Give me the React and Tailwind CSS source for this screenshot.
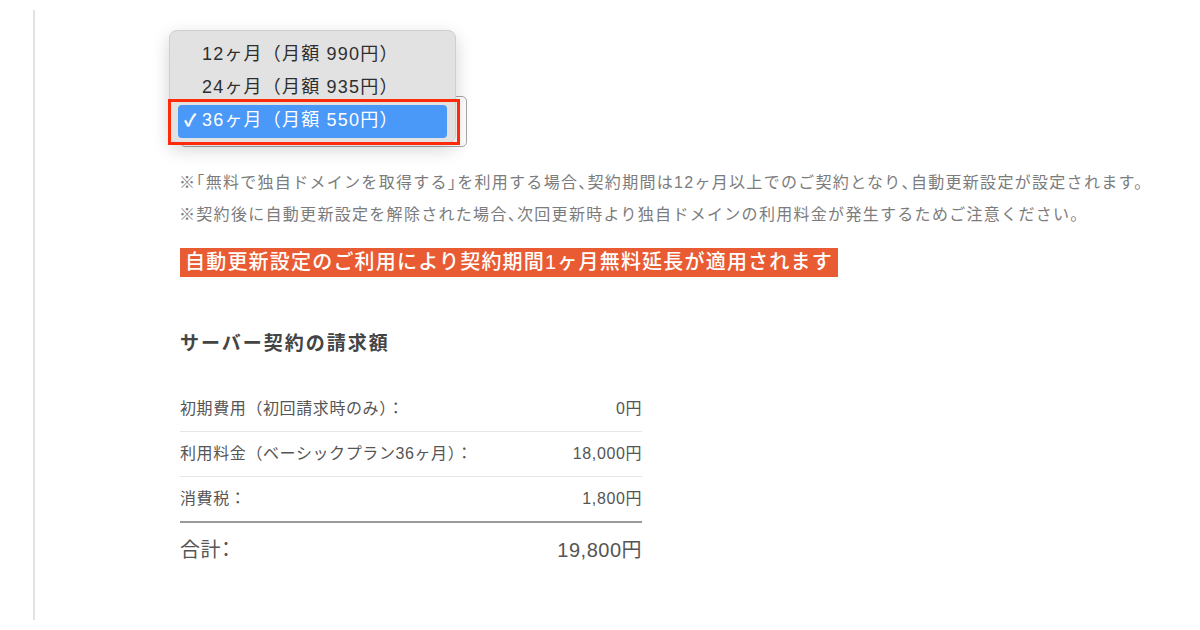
import React from "react";

const options = [
  { label: "12ヶ月（月額 990円）", selected: false },
  { label: "24ヶ月（月額 935円）", selected: false },
  { label: "36ヶ月（月額 550円）", selected: true },
];

const rows = [
  { label: "初期費用（初回請求時のみ）：", value: "0円" },
  { label: "利用料金（ベーシックプラン36ヶ月）：", value: "18,000円" },
  { label: "消費税：", value: "1,800円" },
];

// half-width punctuation like the original
const P = ({ children }) => <span className="[font-feature-settings:'halt']">{children}</span>;

const App = () => {
  return (
    <div className="w-[1200px] h-[630px] bg-white pl-[33px] pt-[10px] font-['Liberation_Sans','Noto_Sans_CJK_JP',sans-serif]">
      <div className="h-[610px] border-l-2 border-[#e2e2e2] pl-[145px] pt-[86px]">
        {/* select with open menu */}
        <div className="relative w-[287px] h-[51px] border border-[#a8a8a8] rounded-[5px] bg-white">
          <div className="absolute left-[-12px] top-[-67px] w-[287px] h-[113px] rounded-[8px] bg-[#e2e2e2] border border-[#cfcfcf] shadow-[0_6px_18px_rgba(0,0,0,0.18)] pt-[8px] px-[8px]">
            {options.map((opt) => (
              <div
                key={opt.label}
                className={
                  opt.selected
                    ? "relative h-[33px] flex items-center rounded-[4px] bg-[#4a98f7] text-white"
                    : "relative h-[33px] flex items-center text-[#2e2e2e]"
                }
              >
                {opt.selected && (
                  <span className="absolute left-[6px] top-[7px] text-[17px] font-bold leading-none">✓</span>
                )}
                <span className="pl-[24px] mb-[4px] text-[18px] tracking-[1.2px] leading-none">{opt.label}</span>
              </div>
            ))}
          </div>
          {/* annotation */}
          <div className="absolute left-[-13px] top-[2px] w-[292px] h-[46px] border-[3px] border-[#ff2a0a]" />
        </div>

        <div className="mt-[20px] text-[16px] leading-[32px] tracking-[1.3px] text-[#7c7c7c] whitespace-nowrap -ml-[1px]">
          <p>
            ※<P>「</P>無料で独自ドメインを取得する<P>」</P>を利用する場合<P>、</P>契約期間は12ヶ月以上でのご契約となり<P>、</P>自動更新設定が設定されます。
          </p>
          <p>
            ※契約後に自動更新設定を解除された場合<P>、</P>次回更新時より独自ドメインの利用料金が発生するためご注意ください。
          </p>
        </div>

        <div className="mt-[17px] inline-block bg-[#e95b33] text-white text-[20px] leading-[29px] tracking-[1.2px] font-medium px-[5px] whitespace-nowrap">
          自動更新設定のご利用により契約期間1ヶ月無料延長が適用されます
        </div>

        <h2 className="mt-[53px] text-[19px] leading-[28px] tracking-[2px] font-bold text-[#444]">
          サーバー契約の請求額
        </h2>

        <div className="mt-[29px] w-[462px] text-[#555]">
          {rows.map((r, i) => (
            <div
              key={r.label}
              className={
                i === rows.length - 1
                  ? "h-[46px] flex items-center justify-between border-b-2 border-[#9a9a9a] text-[16px] tracking-[0.6px]"
                  : "h-[45px] flex items-center justify-between border-b border-[#e6e6e6] text-[16px] tracking-[0.6px]"
              }
            >
              <span>{r.label}</span>
              <span>{r.value}</span>
            </div>
          ))}
          <div className="h-[54px] flex items-center justify-between text-[20px] tracking-[0.5px]">
            <span>合計<P>：</P></span>
            <span>19,800円</span>
          </div>
        </div>
      </div>
    </div>
  );
};

export default App;
